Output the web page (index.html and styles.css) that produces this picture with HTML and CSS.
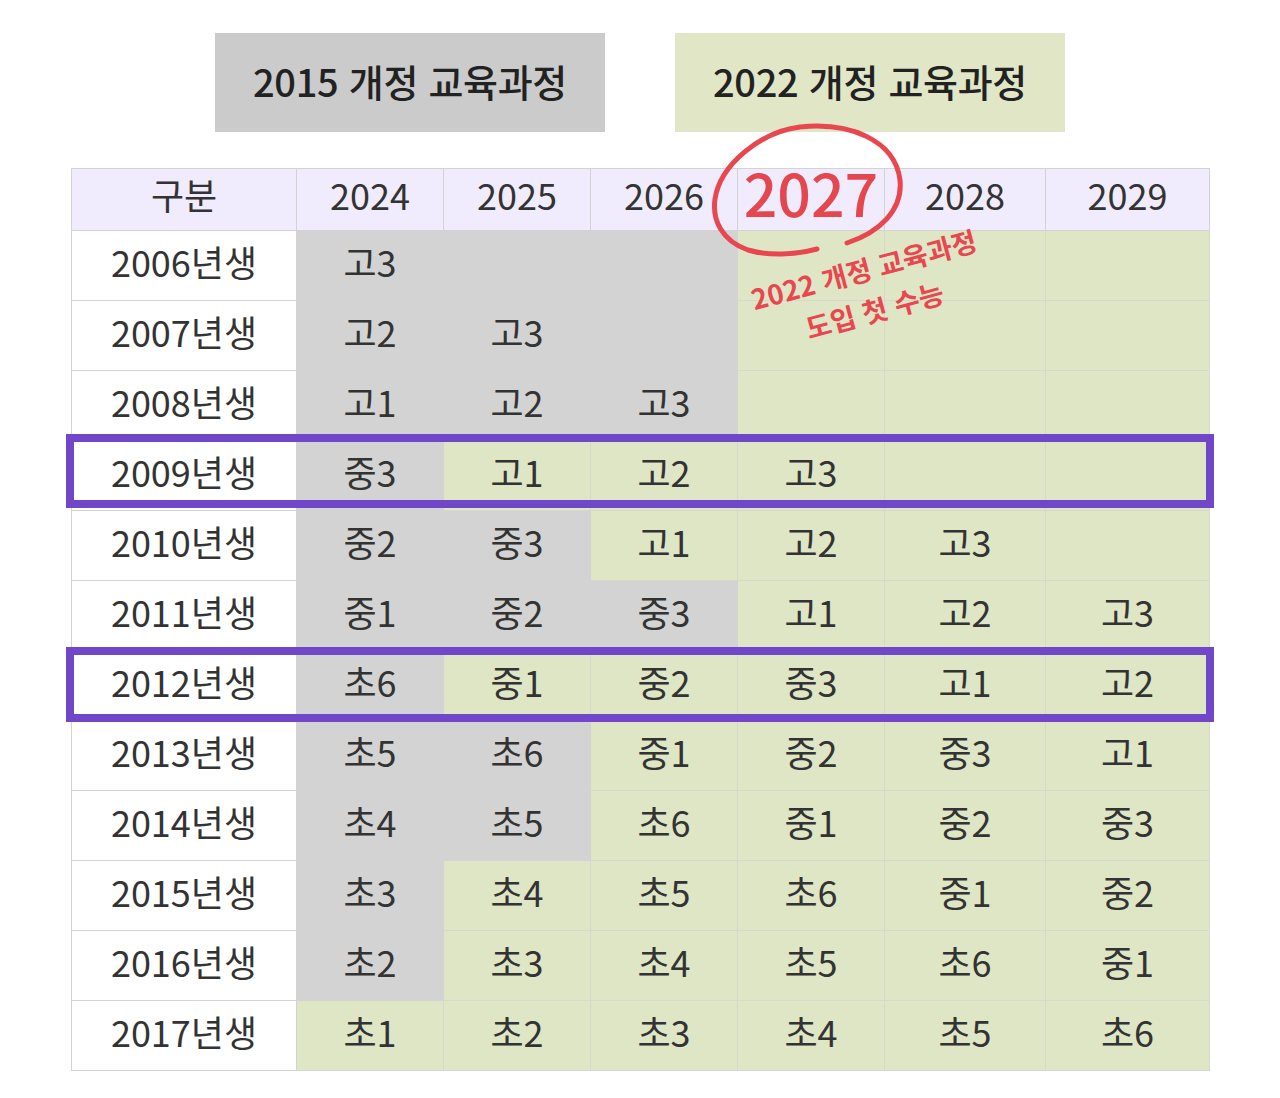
FILE: index.html
```html
<!DOCTYPE html>
<html lang="ko">
<head>
<meta charset="utf-8">
<title>교육과정 적용 학년표</title>
<link rel="stylesheet" href="styles.css">
</head>
<body>
<div class="page">
  <div class="legend">
    <div class="legend-box legend-old">2015 개정 교육과정</div>
    <div class="legend-box legend-new">2022 개정 교육과정</div>
  </div>

  <div class="table-wrap">
    <div class="grid">
      <div class="cell head">구분</div>
      <div class="cell head">2024</div>
      <div class="cell head">2025</div>
      <div class="cell head">2026</div>
      <div class="cell head hot">2027</div>
      <div class="cell head">2028</div>
      <div class="cell head">2029</div>

      <div class="cell label">2006년생</div>
      <div class="cell g">고3</div><div class="cell g"></div><div class="cell g"></div><div class="cell n"></div><div class="cell n"></div><div class="cell n"></div>

      <div class="cell label">2007년생</div>
      <div class="cell g">고2</div><div class="cell g">고3</div><div class="cell g"></div><div class="cell n"></div><div class="cell n"></div><div class="cell n"></div>

      <div class="cell label">2008년생</div>
      <div class="cell g">고1</div><div class="cell g">고2</div><div class="cell g">고3</div><div class="cell n"></div><div class="cell n"></div><div class="cell n"></div>

      <div class="cell label">2009년생</div>
      <div class="cell g">중3</div><div class="cell n">고1</div><div class="cell n">고2</div><div class="cell n">고3</div><div class="cell n"></div><div class="cell n"></div>

      <div class="cell label">2010년생</div>
      <div class="cell g">중2</div><div class="cell g">중3</div><div class="cell n">고1</div><div class="cell n">고2</div><div class="cell n">고3</div><div class="cell n"></div>

      <div class="cell label">2011년생</div>
      <div class="cell g">중1</div><div class="cell g">중2</div><div class="cell g">중3</div><div class="cell n">고1</div><div class="cell n">고2</div><div class="cell n">고3</div>

      <div class="cell label">2012년생</div>
      <div class="cell g">초6</div><div class="cell n">중1</div><div class="cell n">중2</div><div class="cell n">중3</div><div class="cell n">고1</div><div class="cell n">고2</div>

      <div class="cell label">2013년생</div>
      <div class="cell g">초5</div><div class="cell g">초6</div><div class="cell n">중1</div><div class="cell n">중2</div><div class="cell n">중3</div><div class="cell n">고1</div>

      <div class="cell label">2014년생</div>
      <div class="cell g">초4</div><div class="cell g">초5</div><div class="cell n">초6</div><div class="cell n">중1</div><div class="cell n">중2</div><div class="cell n">중3</div>

      <div class="cell label">2015년생</div>
      <div class="cell g">초3</div><div class="cell n">초4</div><div class="cell n">초5</div><div class="cell n">초6</div><div class="cell n">중1</div><div class="cell n">중2</div>

      <div class="cell label">2016년생</div>
      <div class="cell g">초2</div><div class="cell n">초3</div><div class="cell n">초4</div><div class="cell n">초5</div><div class="cell n">초6</div><div class="cell n">중1</div>

      <div class="cell label">2017년생</div>
      <div class="cell n">초1</div><div class="cell n">초2</div><div class="cell n">초3</div><div class="cell n">초4</div><div class="cell n">초5</div><div class="cell n">초6</div>
    </div>

    <div class="mark mark-2009"></div>
    <div class="mark mark-2012"></div>

    <svg class="circle" width="210" height="140" viewBox="0 0 210 140" aria-hidden="true">
      <path d="M117,129 C95,135 68,136 48,130 C22,121 12,100 15,79 C20,45 60,12 100,7 C150,2 195,20 200,60 C203,90 180,112 147,123" fill="none" stroke="#e8474f" stroke-width="5" stroke-linecap="round"/>
    </svg>

    <div class="note">2022 개정 교육과정<br>도입 첫 수능</div>
  </div>
</div>
</body>
</html>
```

FILE: styles.css
```css
* { box-sizing: border-box; }

body {
  margin: 0;
  background: #ffffff;
  font-family: "Noto Sans CJK KR", "Noto Sans", sans-serif;
  color: #333333;
}

.page {
  width: 1280px;
  padding-top: 33px;
  display: flex;
  flex-direction: column;
  align-items: center;
  gap: 36px;
}

.legend {
  display: flex;
  gap: 70px;
}

.legend-box {
  width: 390px;
  height: 99px;
  padding-bottom: 4px;
  display: flex;
  align-items: center;
  justify-content: center;
  font-size: 38px;
  font-weight: 500;
  color: #222222;
  letter-spacing: -0.3px;
}

.legend-old { background: #cbcbcb; }
.legend-new { background: #e0e6c6; }

.table-wrap {
  position: relative;
  margin-left: 1px;
}

.grid {
  display: grid;
  grid-template-columns: 225px 147px 147px 147px 147px 161px 164px;
  grid-template-rows: 62px repeat(12, 70px);
  border-top: 1px solid #d3d3d3;
  border-left: 1px solid #d3d3d3;
}

.cell {
  border-right: 1px solid #d3d3d3;
  border-bottom: 1px solid #d3d3d3;
  padding-bottom: 10px;
  display: flex;
  align-items: center;
  justify-content: center;
  font-size: 36px;
  line-height: 1;
  color: #333333;
}

.head { background: #f1ecfd; padding-bottom: 12px; }
.hot {
  color: #e5474f;
  font-size: 59px;
  font-weight: 500;
  padding-bottom: 16px;
}
.label { background: #ffffff; }
.g { background: #d3d3d3; }
.n { background: #dfe6c5; border-color: #d6d8cc; }

.mark {
  position: absolute;
  left: -5px;
  width: 1148px;
  border: 8px solid #7047c8;
}
.mark-2009 { top: 266px; height: 74px; }
.mark-2012 { top: 479px; height: 75px; }

.circle {
  position: absolute;
  left: 629px;
  top: -48px;
}

.note {
  position: absolute;
  left: 798px;
  top: 121px;
  transform: translate(-50%, -50%) rotate(-15deg);
  white-space: nowrap;
  text-align: center;
  color: #e8474f;
  font-size: 27.5px;
  font-weight: 700;
  line-height: 42px;
}
```
